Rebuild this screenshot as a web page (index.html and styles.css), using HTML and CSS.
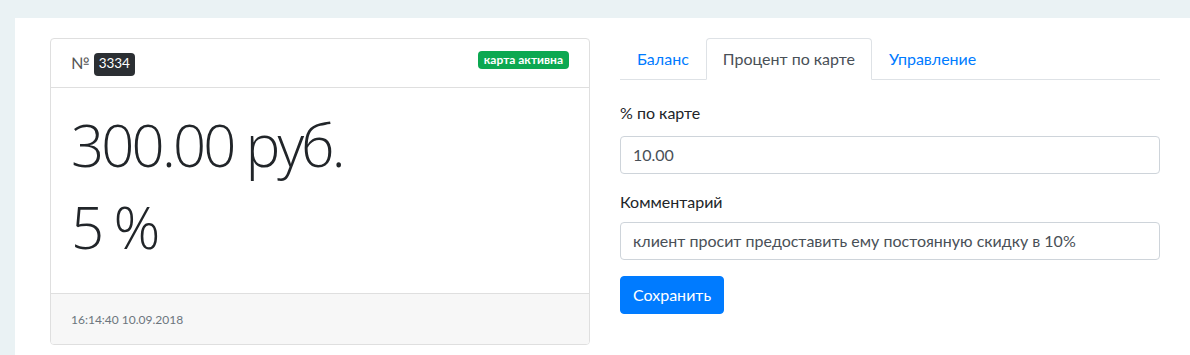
FILE: index.html
```html
<!DOCTYPE html>
<html lang="ru">
<head>
<meta charset="utf-8">
<title>Карта</title>
<link rel="stylesheet" href="styles.css">
</head>
<body>
<div class="panel">
  <div class="row">
    <div class="card">
      <div class="card-header">
        <span class="num">№ <span class="badge badge-dark">3334</span></span>
        <span class="badge badge-success">карта активна</span>
      </div>
      <div class="card-body">
        <div class="display">300.00 руб.</div>
        <div class="display">5 %</div>
      </div>
      <div class="card-footer">
        <small>16:14:40 10.09.2018</small>
      </div>
    </div>
    <div class="side">
      <ul class="tabs">
        <li><a class="tab">Баланс</a></li>
        <li><a class="tab active">Процент по карте</a></li>
        <li><a class="tab">Управление</a></li>
      </ul>
      <form class="tab-content">
        <div class="form-group first">
          <label class="label">% по карте</label>
          <div class="input">10.00</div>
        </div>
        <div class="form-group">
          <label class="label">Комментарий</label>
          <div class="input">клиент просит предоставить ему постоянную скидку в 10%</div>
        </div>
        <button type="button" class="btn">Сохранить</button>
      </form>
    </div>
  </div>
</div>
</body>
</html>
```
FILE: styles.css
```css
html, body {
  margin: 0;
  padding: 0;
}
body {
  background: #eaf2f4;
  font-family: "Lato", "Open Sans", sans-serif;
  font-size: 16px;
  line-height: 1.5;
  color: #212529;
  padding: 18px 0 0 15px;
  height: 355px;
  box-sizing: border-box;
  overflow: hidden;
}
.panel {
  background: #fff;
  height: 100%;
  padding: 20px 0 0 35px;
  box-sizing: border-box;
}
.row {
  display: grid;
  grid-template-columns: 540px 540px;
  column-gap: 30px;
  align-items: start;
}
.card {
  border: 1px solid #dfdfdf;
  border-radius: 4px;
  overflow: hidden;
}
.card-header {
  display: flex;
  justify-content: space-between;
  align-items: flex-start;
  padding: 12px 20px;
  border-bottom: 1px solid #dfdfdf;
  height: 24px;
}
.num {
  color: #555;
  font-size: 16px;
  line-height: 24px;
}
.badge {
  display: inline-block;
  border-radius: 4px;
  line-height: 1;
  white-space: nowrap;
}
.badge-dark {
  background: #2b2f33;
  color: #fff;
  font-size: 13.5px;
  padding: 4px 5px 5px;
  vertical-align: 1px;
}
.badge-success {
  background: #0ca851;
  color: #fff;
  font-size: 12px;
  font-weight: 700;
  padding: 3px 6px;
}
.card-body {
  padding: 16px 20px 14px;
  height: 175px;
}
.display {
  font-family: "Open Sans", sans-serif;
  font-size: 58px;
  font-weight: 300;
  line-height: 82px;
  letter-spacing: -2.8px;
  color: #212529;
}
.card-footer {
  background: #f7f7f7;
  border-top: 1px solid #dfdfdf;
  padding: 12px 20px;
  line-height: 24px;
}
.card-footer small {
  font-size: 12px;
  color: #6c757d;
}
.tabs {
  list-style: none;
  margin: 0;
  padding: 0;
  display: flex;
  border-bottom: 1px solid #dee2e6;
}
.tabs li {
  margin-bottom: -1px;
}
.tab {
  display: block;
  padding: 8px 16px;
  border: 1px solid transparent;
  border-radius: 4px 4px 0 0;
  color: #007bff;
  line-height: 24px;
}
.tab.active {
  color: #495057;
  background: #fff;
  border-color: #dee2e6 #dee2e6 #fff;
}
.tab-content {
  padding-top: 21px;
}
.form-group {
  margin-bottom: 16px;
}
.form-group.first .label {
  margin-bottom: 11px;
}
.label {
  display: block;
  margin-bottom: 8px;
  line-height: 24px;
  color: #212529;
}
.input {
  height: 38px;
  box-sizing: border-box;
  padding: 6px 12px;
  border: 1px solid #ced4da;
  border-radius: 4px;
  color: #495057;
  line-height: 24px;
}
.btn {
  font-family: inherit;
  font-size: 16px;
  line-height: 24px;
  padding: 6px 12px;
  border: 1px solid #007bff;
  background: #007bff;
  color: #fff;
  border-radius: 4px;
}
```
